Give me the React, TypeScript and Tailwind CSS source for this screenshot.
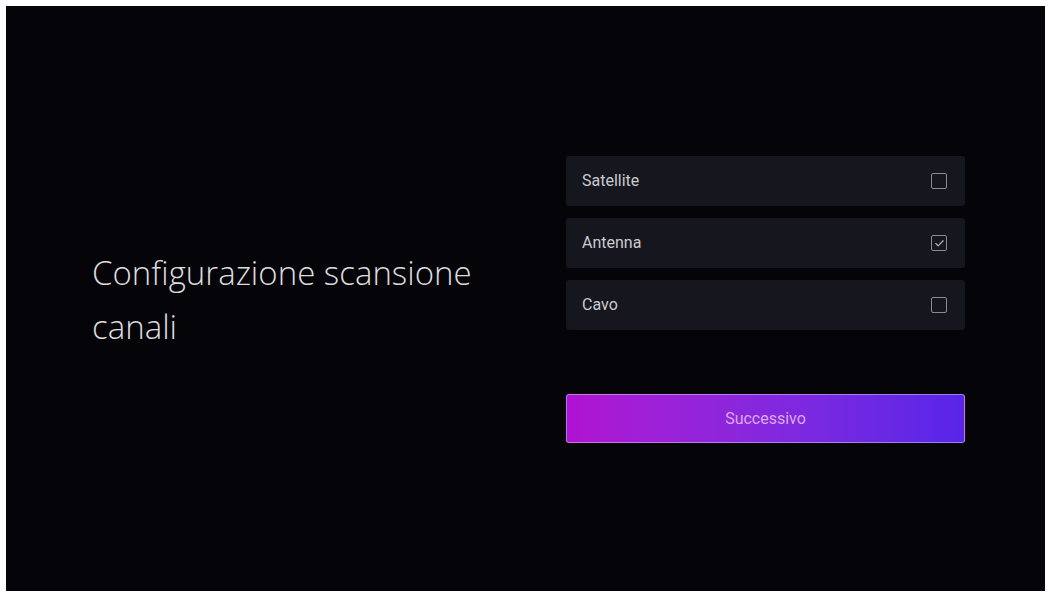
import { Check } from "lucide-react";

const sources = [
  { label: "Satellite", checked: false },
  { label: "Antenna", checked: true },
  { label: "Cavo", checked: false },
];

function SourceRow({ label, checked }: { label: string; checked: boolean }) {
  return (
    <div className="flex h-[50px] items-center justify-between rounded-[3px] bg-[#16161e] pl-[16px] pr-[18px]">
      <span className="text-[16px] text-[#cbcbd0]">{label}</span>
      <span className="flex h-[16px] w-[16px] items-center justify-center rounded-[2px] border-[1.5px] border-[#8b8b90]">
        {checked && <Check className="h-[11px] w-[11px] text-[#b5b5ba]" strokeWidth={2.5} />}
      </span>
    </div>
  );
}

export default function App() {
  return (
    <div className="h-[593px] w-[1048px] bg-white pl-[6px] pt-[6px] pr-[3px] pb-[2px]">
      <div
        className="flex h-full w-full items-center bg-[#050509] pl-[86px] pr-[80px] pt-[2px]"
        style={{ fontFamily: "Roboto, 'Noto Sans', sans-serif" }}
      >
        <h1
          className="text-[33px] font-light leading-[54px] text-[#dcdcde]"
          style={{ fontFamily: "'Open Sans', 'Noto Sans', sans-serif" }}
        >
          Configurazione scansione
          <br />
          canali
        </h1>
        <div className="ml-auto flex w-[399px] flex-col">
          <div className="flex flex-col gap-[12px]">
            {sources.map((s) => (
              <SourceRow key={s.label} label={s.label} checked={s.checked} />
            ))}
          </div>
          <button className="mt-[64px] h-[49px] w-full rounded-[3px] border border-white/40 bg-gradient-to-r from-[#b012d2] to-[#5725e8] text-[16px] text-[#dca8ee]">
            Successivo
          </button>
        </div>
      </div>
    </div>
  );
}
